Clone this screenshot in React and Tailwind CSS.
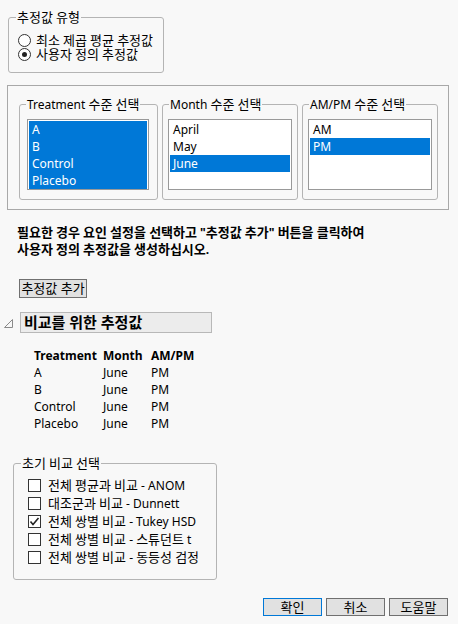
import React from 'react';

const treatments = ['A', 'B', 'Control', 'Placebo'];
const months = ['April', 'May', 'June'];
const ampm = ['AM', 'PM'];

const compares = [
  { label: '전체 평균과 비교 - ANOM', on: false },
  { label: '대조군과 비교 - Dunnett', on: false },
  { label: '전체 쌍별 비교 - Tukey HSD', on: true },
  { label: '전체 쌍별 비교 - 스튜던트 t', on: false },
  { label: '전체 쌍별 비교 - 동등성 검정', on: false },
];

// 한글 부분만 조금 크게 (Noto CJK 글자폭 보정)
function T({ children, size = 'text-[13px]' }) {
  return String(children)
    .split(/([\uAC00-\uD7A3]+)/)
    .map((s, i) =>
      /[\uAC00-\uD7A3]/.test(s) ? (
        <span key={i} className={size}>
          {s}
        </span>
      ) : (
        s
      )
    );
}

function Radio({ on, label }) {
  return (
    <div className="flex items-center h-[14px] leading-[14px]">
      <span className="w-[13px] h-[13px] rounded-full border border-[#333] bg-white flex items-center justify-center mr-[5px] shrink-0">
        {on && <span className="w-[5px] h-[5px] rounded-full bg-[#222]" />}
      </span>
      <span>
        <T>{label}</T>
      </span>
    </div>
  );
}

function Check({ on, label }) {
  return (
    <div className="flex items-center h-[18px] leading-[18px]">
      <span className="w-[13px] h-[13px] border border-[#333] bg-white flex items-center justify-center mr-[7px] shrink-0">
        {on && (
          <svg width="11" height="11" viewBox="0 0 11 11">
            <path d="M1.5 5.5 L4 8.5 L9.5 2" fill="none" stroke="#222" strokeWidth="1.6" />
          </svg>
        )}
      </span>
      <span>
        <T>{label}</T>
      </span>
    </div>
  );
}

function ListGroup({ title, items, selected, width, boxW, boxMl }) {
  return (
    <fieldset className={`border border-[#b4b4b4] rounded-[3px] h-[103px] ${width}`}>
      <legend className="ml-[6px] px-[1px] leading-[15px]">
        <T>{title}</T>
      </legend>
      <div className={`mt-[7px] ${boxMl} ${boxW} h-[71px] border border-[#999] bg-white p-[1px]`}>
        {items.map((it) => (
          <div
            key={it}
            className={`h-[17px] leading-[17px] pl-[3px] ${selected.includes(it) ? 'bg-[#0078d7] text-white' : ''}`}
          >
            {it}
          </div>
        ))}
      </div>
    </fieldset>
  );
}

export default function App() {
  return (
    <div className="w-[458px] h-[624px] bg-[#f8f8f8] text-[12px] text-black font-['Noto_Sans','Noto_Sans_CJK_KR',sans-serif] overflow-hidden flex flex-col">
      {/* 추정값 유형 */}
      <fieldset className="mt-[10px] ml-[8px] w-[156px] h-[63px] border border-[#b4b4b4] rounded-[3px]">
        <legend className="ml-[7px] px-[1px] leading-[15px]">
          <T>추정값 유형</T>
        </legend>
        <div className="mt-[8px] pl-[9px] flex flex-col">
          <Radio label="최소 제곱 평균 추정값" />
          <Radio on label="사용자 정의 추정값" />
        </div>
      </fieldset>

      {/* 수준 선택 */}
      <div className="mt-[12px] ml-[7px] w-[442px] h-[125px] border border-[#a8a8a8] pt-[11px] pl-[11px] flex gap-[4px]">
        <ListGroup
          title="Treatment 수준 선택"
          items={treatments}
          selected={treatments}
          width="w-[139px]"
          boxW="w-[122px]"
          boxMl="ml-[7px]"
        />
        <ListGroup title="Month 수준 선택" items={months} selected={['June']} width="w-[136px]" boxW="w-[124px]" boxMl="ml-[5px]" />
        <ListGroup title="AM/PM 수준 선택" items={ampm} selected={['PM']} width="w-[136px]" boxW="w-[124px]" boxMl="ml-[5px]" />
      </div>

      {/* 안내 */}
      <div className="mt-[14px] ml-[17px] font-bold leading-[17px]">
        <div>
          <T>필요한 경우 요인 설정을 선택하고 "추정값 추가" 버튼을 클릭하여</T>
        </div>
        <div>
          <T>사용자 정의 추정값을 생성하십시오.</T>
        </div>
      </div>

      <div className="mt-[21px] ml-[19px]">
        <button className="w-[68px] h-[19px] bg-[#e1e1e1] border border-[#707070] leading-[17px] text-[13px] whitespace-nowrap">
          추정값 추가
        </button>
      </div>

      {/* 비교를 위한 추정값 */}
      <div className="mt-[14px] flex items-center">
        <svg width="20" height="21" viewBox="0 0 20 21" className="shrink-0">
          <path d="M4.5 15.5 L12.5 15.5 L12.5 7.5 Z" fill="none" stroke="#8a8a8a" strokeWidth="1" />
        </svg>
        <div className="w-[192px] h-[21px] bg-[#ececec] border border-[#b8b8b8] pl-[3px] font-bold text-[15px] leading-[19px] whitespace-nowrap">
          비교를 위한 추정값
        </div>
      </div>

      <div className="mt-[14px] ml-[34px] grid grid-cols-[69px_48px_60px] leading-[17px]">
        <div className="font-bold">Treatment</div>
        <div className="font-bold">Month</div>
        <div className="font-bold">AM/PM</div>
        {treatments.map((t) => (
          <React.Fragment key={t}>
            <div>{t}</div>
            <div>June</div>
            <div>PM</div>
          </React.Fragment>
        ))}
      </div>

      {/* 초기 비교 선택 */}
      <fieldset className="mt-[24px] ml-[13px] w-[204px] h-[124px] border border-[#b4b4b4] rounded-[3px]">
        <legend className="ml-[7px] px-[1px] leading-[15px]">
          <T>초기 비교 선택</T>
        </legend>
        <div className="mt-[5px] pl-[14px] flex flex-col">
          {compares.map((c) => (
            <Check key={c.label} on={c.on} label={c.label} />
          ))}
        </div>
      </fieldset>

      <div className="mt-[18px] pr-[10px] flex justify-end gap-[4px] text-[13px]">
        <button className="w-[59px] h-[18px] bg-[#e1e1e1] border border-[#0078d7] leading-[16px]">확인</button>
        <button className="w-[59px] h-[18px] bg-[#e1e1e1] border border-[#707070] leading-[16px]">취소</button>
        <button className="w-[59px] h-[18px] bg-[#e1e1e1] border border-[#707070] leading-[16px]">도움말</button>
      </div>
    </div>
  );
}
